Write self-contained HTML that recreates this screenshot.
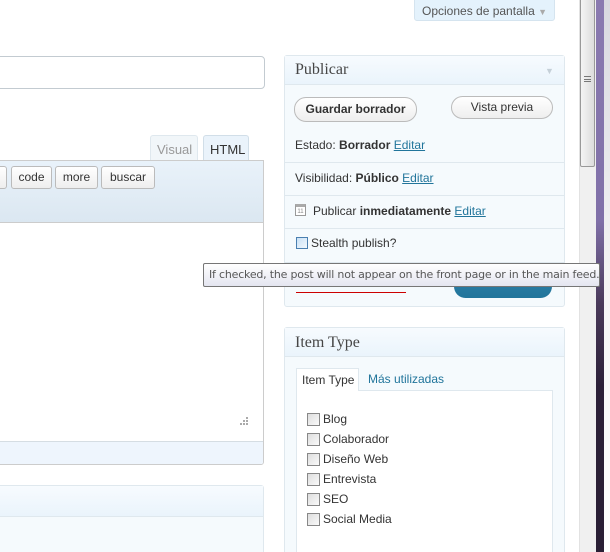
<!DOCTYPE html>
<html><head><meta charset="utf-8"><style>
*{box-sizing:border-box;margin:0;padding:0}
html,body{width:610px;height:552px;overflow:hidden}
body{background:#fff;font-family:"Liberation Sans",sans-serif;font-size:12px;color:#333;position:relative}
.a{position:absolute}
.serif{font-family:"Liberation Serif",serif;font-size:16px;color:#464646}
.btn{position:absolute;border:1px solid #bbb;border-radius:3px;background:linear-gradient(#fff,#eee);font-size:12px;color:#333;text-align:center;line-height:20px}
.row{position:absolute;left:284px;width:280px;border-top:1px solid #dfe8ee}
.lnk{color:#21759b;text-decoration:underline}
.cb{position:absolute;width:13px;height:13px;border:1px solid #888;background:linear-gradient(135deg,#ddd,#fafafa)}
.cl{position:absolute;font-size:12px;color:#333}
</style></head><body>
<div class="a" style="left:414px;top:-4px;width:141px;height:25px;border:1px solid #d5e4ef;border-radius:0 0 3px 3px;background:#e4f2fc;font-size:12px;color:#555;padding:7px 0 0 7px">Opciones de pantalla <span style="color:#aaa;font-size:9px">▼</span></div>
<div class="a" style="left:-5px;top:56px;width:270px;height:33px;border:1px solid #c3cbd1;border-radius:4px"></div>
<div class="a" style="left:150px;top:135px;width:48px;height:26px;border:1px solid #dfe8ee;border-bottom:none;border-radius:3px 3px 0 0;background:#f1f6f9;color:#999;font-size:13px;padding:6px 0 0 6px">Visual</div>
<div class="a" style="left:203px;top:135px;width:46px;height:26px;border:1px solid #d1dee8;border-bottom:none;border-radius:3px 3px 0 0;background:#eaf3fb;color:#333;font-size:13px;padding:6px 0 0 6px">HTML</div>
<div class="a" style="left:-5px;top:160px;width:269px;height:305px;border:1px solid #ccc;border-radius:0 0 3px 3px;background:#fff;overflow:hidden">
 <div style="height:62px;background:linear-gradient(#e9f2fa,#dbe7f1);border-bottom:1px solid #ccc"></div>
 <div class="a" style="left:0;bottom:0;width:100%;height:23px;background:#eef5fd;border-top:1px solid #d5dde3"></div>
</div>
<div class="btn" style="left:-4px;top:166px;width:11px;height:23px"></div>
<div class="btn" style="left:11px;top:166px;width:41px;height:23px">code</div>
<div class="btn" style="left:55px;top:166px;width:43px;height:23px">more</div>
<div class="btn" style="left:101px;top:166px;width:54px;height:23px">buscar</div>
<svg class="a" style="left:238px;top:416px" width="12" height="10"><g fill="#aaa"><rect x="8" y="1" width="2" height="2"/><rect x="5" y="4" width="2" height="2"/><rect x="8" y="4" width="2" height="2"/><rect x="2" y="7" width="2" height="2"/><rect x="5" y="7" width="2" height="2"/><rect x="8" y="7" width="2" height="2"/></g></svg>
<div class="a" style="left:-5px;top:485px;width:269px;height:80px;border:1px solid #dfe8ee;border-radius:3px;background:#f5fafd">
 <div style="height:31px;background:linear-gradient(#f7fbfe,#eaf4fc);border-bottom:1px solid #dfe8ee"></div>
</div>
<div class="a" style="left:284px;top:55px;width:281px;height:252px;border:1px solid #dfe8ee;border-radius:3px;background:#f5fafd"></div>
<div class="a" style="left:285px;top:56px;width:279px;height:29px;background:linear-gradient(#f7fbfe,#eaf4fc);border-bottom:1px solid #dfe8ee"></div>
<div class="a serif" style="left:295px;top:61px">Publicar</div>
<div class="a" style="left:545px;top:66px;color:#c5d0d8;font-size:9px">▼</div>
<div class="btn" style="left:294px;top:97px;width:123px;height:25px;border-radius:12px;font-weight:bold;line-height:23px">Guardar borrador</div>
<div class="btn" style="left:451px;top:96px;width:102px;height:23px;border-radius:12px;line-height:21px">Vista previa</div>
<div class="a" style="left:295px;top:138px">Estado: <b>Borrador</b> <span class="lnk">Editar</span></div>
<div class="row" style="top:162px"></div>
<div class="a" style="left:295px;top:171px">Visibilidad: <b>Público</b> <span class="lnk">Editar</span></div>
<div class="row" style="top:195px"></div>
<div class="a" style="left:295px;top:204px;width:11px;height:12px;border:1px solid #999;background:#fff;font-size:6px;color:#888;text-align:center;line-height:10px;border-top:3px solid #aaa">11</div>
<div class="a" style="left:313px;top:204px">Publicar <b>inmediatamente</b> <span class="lnk">Editar</span></div>
<div class="row" style="top:228px"></div>
<div class="a" style="left:296px;top:237px;width:12px;height:12px;border:1px solid #4a7fb0;background:linear-gradient(135deg,#c9e1f6,#f2f8fd)"></div>
<div class="a" style="left:311px;top:236px">Stealth publish?</div>
<div class="row" style="top:262px"></div>
<div class="a" style="left:296px;top:280px;width:110px;border-bottom:1px solid #c00;color:#c00;height:13px"></div>
<div class="a" style="left:454px;top:275px;width:98px;height:23px;border-radius:12px;background:linear-gradient(#2e7ea7,#21759b)"></div>
<div class="a" style="left:284px;top:327px;width:281px;height:240px;border:1px solid #dfe8ee;border-radius:3px;background:#f5fafd"></div>
<div class="a" style="left:285px;top:328px;width:279px;height:29px;background:linear-gradient(#f7fbfe,#eaf4fc);border-bottom:1px solid #dfe8ee"></div>
<div class="a serif" style="left:295px;top:334px">Item Type</div>
<div class="a" style="left:296px;top:390px;width:257px;height:170px;border:1px solid #dfe8ee;background:#fff"></div>
<div class="a" style="left:296px;top:368px;width:63px;height:23px;border:1px solid #dfe8ee;border-bottom:none;background:#fff;padding:4px 0 0 5px">Item Type</div>
<div class="a" style="left:368px;top:372px;color:#21759b">Más utilizadas</div>
<div class="cb" style="left:307px;top:413px"></div><div class="cl" style="left:323px;top:412px">Blog</div>
<div class="cb" style="left:307px;top:433px"></div><div class="cl" style="left:323px;top:432px">Colaborador</div>
<div class="cb" style="left:307px;top:453px"></div><div class="cl" style="left:323px;top:452px">Diseño Web</div>
<div class="cb" style="left:307px;top:473px"></div><div class="cl" style="left:323px;top:472px">Entrevista</div>
<div class="cb" style="left:307px;top:493px"></div><div class="cl" style="left:323px;top:492px">SEO</div>
<div class="cb" style="left:307px;top:513px"></div><div class="cl" style="left:323px;top:512px">Social Media</div>
<div class="a" style="left:579px;top:0;width:17px;height:552px;background:#f0f0f0;border-left:1px solid #e2e2e2"></div>
<div class="a" style="left:580px;top:-3px;width:15px;height:170px;border:1px solid #999;border-radius:2px;background:linear-gradient(90deg,#f4f4f4,#dcdcdc)"></div>
<div class="a" style="left:584px;top:76px;width:7px;height:6px;border-top:1px solid #777;border-bottom:1px solid #777"></div>
<div class="a" style="left:584px;top:79px;width:7px;height:1px;background:#777"></div>
<div class="a" style="left:596px;top:0;width:8px;height:552px;background:linear-gradient(#8a7ab0 0%,#8070a8 40%,#4a3a5a 55%,#2c2038 70%,#2a1f35 100%)"></div>
<div class="a" style="left:604px;top:0;width:6px;height:552px;background:linear-gradient(#d8d8e0,#e8e8ec 30%,#f4f4f4 50%,#fff)"></div>
<div class="a" style="left:203px;top:263px;width:397px;height:24px;border:1px solid #767676;border-radius:2px;background:linear-gradient(#fff,#e4e5f0);font-family:'DejaVu Sans',sans-serif;font-size:11px;color:#575757;padding:4px 0 0 5px;white-space:nowrap;letter-spacing:-0.2px;overflow:hidden">If checked, the post will not appear on the front page or in the main feed.</div>
</body></html>
